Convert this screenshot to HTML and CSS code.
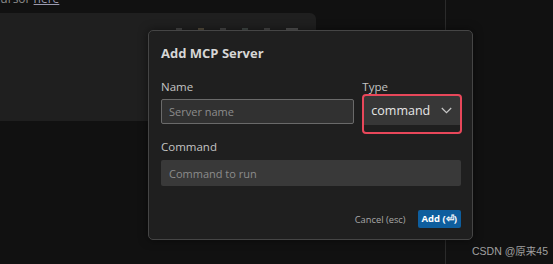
FILE: index.html
```html
<!DOCTYPE html>
<html>
<head>
<meta charset="utf-8">
<link rel="stylesheet" href="styles.css">
</head>
<body>
<div class="app">
  <div class="main">
    <div class="hint">Add MCP server to Cursor <span class="link">here</span></div>
    <div class="panel">
      <div class="panel-tools">
        <span class="tool"></span><span class="tool t2"></span><span class="tool"></span><span class="tool t3"></span><span class="tool"></span><span class="tool t4"></span>
      </div>
    </div>
  </div>
  <div class="side"></div>
</div>

<div class="dialog">
  <div class="title">Add MCP Server</div>
  <div class="row">
    <div class="field name-field">
      <div class="label">Name</div>
      <div class="input bordered"><span class="ph">Server name</span></div>
    </div>
    <div class="field type-field">
      <div class="label">Type</div>
      <div class="select-wrap">
        <div class="select">
          <span class="select-value">command</span>
          <svg class="chev" width="11" height="7" viewBox="0 0 11 7"><path d="M0.8 1 L5.5 5.6 L10.2 1" fill="none" stroke="#c8c8c8" stroke-width="1.2"/></svg>
        </div>
        <div class="highlight"></div>
      </div>
    </div>
  </div>
  <div class="label cmd-label">Command</div>
  <div class="input cmd-input"><span class="ph">Command to run</span></div>
  <div class="footer">
    <span class="cancel">Cancel (esc)</span>
    <span class="add">Add (⏎)</span>
  </div>
</div>

<div class="watermark">CSDN @原来45</div>
</body>
</html>
```

FILE: styles.css
```css
* { box-sizing: border-box; }
html, body {
  margin: 0;
  width: 553px;
  height: 264px;
  overflow: hidden;
  background: #111111;
  font-family: "Open Sans", "Noto Sans", sans-serif;
}
body { position: relative; }

.app {
  display: flex;
  height: 264px;
}
.main {
  width: 446px;
  border-right: 1px solid #2b2b2b;
}
.side { flex: 1; }

.hint {
  height: 13px;
  line-height: 13px;
  margin-top: -8px;
  margin-bottom: 8px;
  margin-left: -114px;
  font-size: 12px;
  color: #8a8a8a;
  white-space: nowrap;
}
.link {
  color: #9a9ab0;
  text-decoration: underline;
}

.panel {
  width: 316px;
  height: 108px;
  background: #1f1f1f;
  border-top-right-radius: 6px;
}
.panel-tools {
  display: flex;
  gap: 16px;
  justify-content: flex-end;
  padding: 15px 18px 0 0;
}
.tool {
  width: 6px;
  height: 2px;
  background: #454545;
}
.t2 { background: #544c3c; }
.t3 { background: #404846; }
.t4 { width: 12px; background: #505050; }

.dialog {
  position: absolute;
  left: 148px;
  top: 30px;
  width: 325px;
  height: 210px;
  background: #1f1f1f;
  border: 1px solid #454545;
  border-radius: 5px;
  padding: 0 11px 11px 12px;
  box-shadow: 0 0 10px rgba(0,0,0,0.5);
}
.title {
  padding-top: 12px;
  line-height: 20px;
  font-size: 13px;
  font-weight: 700;
  color: #d6d6d6;
}
.row {
  display: flex;
  gap: 8px;
  margin-top: 16px;
  height: 46px;
}
.field { display: flex; flex-direction: column; }
.name-field { width: 194px; }
.type-field { width: 99px; }
.label {
  font-size: 11.5px;
  line-height: 16px;
  color: #c4c4c4;
}
.input {
  height: 25px;
  margin-top: 4px;
  background: #313131;
  border-radius: 2px;
  display: flex;
  align-items: center;
  padding-left: 7px;
}
.bordered { border: 1px solid #6a6a6a; }
.ph {
  font-size: 11px;
  color: #8c8c8c;
}
.select-wrap {
  position: relative;
  margin-left: 1px;
}
.select {
  height: 30px;
  background: #373737;
  display: flex;
  align-items: center;
  justify-content: space-between;
  padding: 1px 9px 0 8px;
}
.select-value {
  font-size: 12.5px;
  color: #e6e6e6;
}
.chev { display: block; margin-top: -1px; }
.highlight {
  position: absolute;
  left: -1px;
  top: -1px;
  width: 100px;
  height: 40px;
  border: 2px solid #e8475a;
  border-radius: 4px;
}
.cmd-label { margin-top: 14px; }
.cmd-input {
  height: 26px;
  margin-top: 5px;
  background: #393939;
  padding-left: 8px;
}
.footer {
  display: flex;
  justify-content: flex-end;
  align-items: center;
  gap: 12px;
  margin-top: 24px;
}
.cancel {
  font-size: 9.3px;
  color: #a8a8a8;
}
.add {
  height: 18px;
  line-height: 18px;
  padding: 0 4px;
  background: #0e5e9e;
  color: #ffffff;
  font-size: 9.5px;
  font-weight: 700;
  border-radius: 2px;
}
.watermark {
  position: absolute;
  right: 5px;
  bottom: 6px;
  font-family: "Liberation Sans", "Noto Sans CJK SC", sans-serif;
  font-size: 10.5px;
  color: #a0a0a0;
}
```
